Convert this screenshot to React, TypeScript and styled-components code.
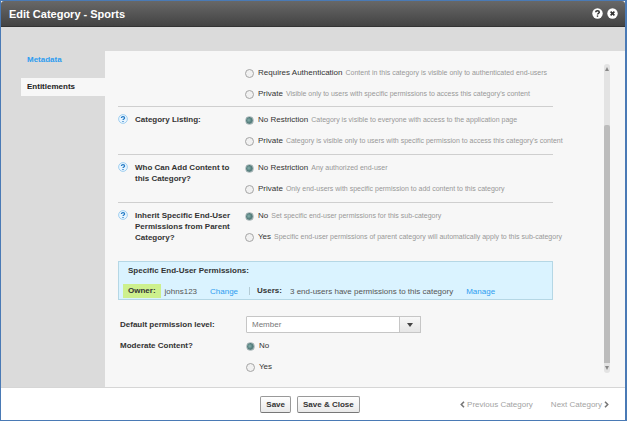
import React from "react";
import styled, { createGlobalStyle } from "styled-components";

const GlobalStyle = createGlobalStyle`
  *, *::before, *::after { box-sizing: border-box; }
  body { margin: 0; }
  body, button, select, input {
    font-family: "Liberation Sans", Arial, Helvetica, sans-serif;
    font-size: 8px;
  }
`;

const Dialog = styled.div`
  display: flex;
  flex-direction: column;
  min-height: 100vh;
  background: #fff;
  border: 1px solid #4a7ab5;
  border-right-width: 2px;
  color: #333;
`;

const Header = styled.header`
  display: flex;
  align-items: center;
  gap: 4px;
  height: 26px;
  padding: 0 7px 0 8px;
  background: linear-gradient(#686868, #434343);
  border-bottom: 1px solid #333;
  border-radius: 3px 3px 0 0;
`;

const Title = styled.h1`
  flex: 1;
  margin: 0;
  color: #fff;
  font-size: 11px;
  line-height: 16px;
`;

const IconButton = styled.button`
  display: flex;
  padding: 0;
  border: 0;
  background: none;
`;

const Body = styled.div`
  display: flex;
  flex: 1;
  padding-top: 24px;
  background: #dbdbdb;
  border-bottom: 1px solid #d6d6d6;
`;

const Sidebar = styled.nav`
  display: flex;
  flex-direction: column;
  flex: 0 0 104px;
  gap: 9px;
  padding: 0 0 0 20px;
`;

const Tab = styled.a<{ $active?: boolean }>`
  height: 18px;
  padding: 0 6px;
  line-height: 18px;
  font-weight: bold;
  text-decoration: none;
  color: ${(p) => (p.$active ? "#222" : "#2e9df0")};
  background: ${(p) => (p.$active ? "#f7f7f7" : "transparent")};
`;

const Main = styled.main`
  display: flex;
  flex: 1;
  min-width: 0;
  padding: 11px 15px 10px 13px;
  background: #f7f7f7;
`;

const Content = styled.div`
  flex: 1;
  min-width: 0;
  margin-right: 51px;
`;

const Section = styled.section<{ $divided?: boolean }>`
  display: grid;
  grid-template-columns: 17px 110px minmax(0, 1fr);
  padding: ${(p) => (p.$divided ? "2px 0 3px" : "0 0 2px")};
  border-top: ${(p) => (p.$divided ? "1px solid #cfcfcf" : "0")};
`;

const HelpCell = styled.div`
  padding: 5px 0 0;
`;

const Question = styled.div`
  padding: 5px 8px 0 0;
  font-weight: bold;
  line-height: 11px;
`;

const Options = styled.div`
  display: flex;
  flex-direction: column;
`;

const Option = styled.label`
  display: flex;
  align-items: center;
  height: 21px;
  white-space: nowrap;
`;

const Radio = styled.input`
  appearance: none;
  flex: none;
  width: 9px;
  height: 9px;
  margin: 2px 4px 0 0;
  border: 1px solid #a5a5a5;
  border-radius: 50%;
  background: #f1f1f1;
  &:checked {
    border-color: #b0bcbe;
    background: radial-gradient(circle at 40% 45%, #86b0ad, #527b7a 50%, #a5b9b9);
  }
`;

const Hint = styled.span`
  margin-left: 3px;
  color: #989898;
  font-size: 7px;
`;

const Permissions = styled.section`
  margin-top: 11px;
  padding: 3px 4px 1px;
  background: #daf3ff;
  border: 1px solid #b5d7e5;
`;

const PermissionsTitle = styled.h2`
  margin: 0 0 7px;
  padding-left: 5px;
  font-size: 8px;
  line-height: 12px;
`;

const PermissionsRow = styled.div`
  display: flex;
  align-items: center;
  height: 14px;
  white-space: nowrap;
  color: #555;
`;

const Owner = styled.strong`
  padding: 0 5px;
  margin-right: 4px;
  line-height: 14px;
  color: #333;
  background: #cdf08d;
`;

const TextLink = styled.a`
  margin-left: 13px;
  color: #2e9df0;
  text-decoration: none;
`;

const Users = styled.strong`
  margin: 0 8px 0 11px;
  padding-left: 7px;
  border-left: 1px solid #b3cbd5;
  line-height: 8px;
  color: #333;
`;

const Settings = styled.div`
  display: grid;
  grid-template-columns: 128px minmax(0, 1fr);
  padding-top: 14px;
`;

const FieldLabel = styled.label`
  padding-left: 2px;
  font-weight: bold;
  line-height: 21px;
`;

const SelectBox = styled.div`
  display: grid;
  align-items: stretch;
  width: 175px;
  height: 17px;
  margin: 2px 0;
`;

const Select = styled.select`
  grid-area: 1 / 1;
  appearance: none;
  width: 100%;
  padding: 0 28px 0 5px;
  border: 1px solid #c6c6c6;
  border-radius: 1px;
  background: #fff;
  color: #777;
`;

const SelectArrow = styled.span`
  grid-area: 1 / 1;
  justify-self: end;
  display: flex;
  align-items: center;
  justify-content: center;
  width: 22px;
  border: 1px solid #c6c6c6;
  background: linear-gradient(#f8f8f8, #e6e6e6);
  pointer-events: none;
`;

const ScrollTrack = styled.div`
  display: flex;
  flex-direction: column;
  flex: 0 0 6px;
  margin: 2px 0 4px;
  border-radius: 3px;
  background: #e3e3e3;
  svg { flex: none; margin: 3px 0 3px 1px; }
`;

const ScrollSpace = styled.div`
  flex: 51;
`;

const ScrollThumb = styled.div`
  flex: 237;
  border-radius: 2px 2px 0 0;
  background: #bcbcbc;
`;

const Footer = styled.footer`
  display: grid;
  grid-template-columns: 1fr auto 1fr;
  align-items: center;
  height: 32px;
  padding: 0 16px 0 10px;
`;

const Actions = styled.div`
  grid-column: 2;
  display: flex;
  gap: 6px;
`;

const Button = styled.button`
  height: 17px;
  padding: 0 5px;
  border: 1px solid #999;
  border-bottom-color: #777;
  border-radius: 2px;
  background: linear-gradient(#fff, #e9e9e9);
  color: #333;
  font-weight: bold;
`;

const Pager = styled.div`
  display: flex;
  justify-content: flex-end;
  gap: 18px;
`;

const PagerLink = styled.a`
  display: flex;
  align-items: center;
  gap: 2px;
  color: #a3a3a3;
  text-decoration: none;
  white-space: nowrap;
`;

const HelpIcon = () => (
  <svg width="10" height="10" viewBox="0 0 10 10" fill="none" aria-hidden="true">
    <circle cx="5" cy="5" r="4.4" fill="#e8f5ff" stroke="#8fc7ee" strokeWidth="0.8" />
    <path d="M3.4 3.9C3.4 2.1 6.6 2.1 6.6 3.9C6.6 4.9 5 4.9 5 6" stroke="#2279c4" strokeWidth="1.2" />
    <path d="M4.4 6.9H5.6V8H4.4Z" fill="#2279c4" />
  </svg>
);

const Chevron = ({ d }: { d: string }) => (
  <svg width="5" height="7" viewBox="0 0 5 7" fill="none" aria-hidden="true">
    <path d={d} stroke="#777" strokeWidth="1.6" />
  </svg>
);

type Choice = { label: string; hint?: string };

function Choices({ name, items, selected }: { name: string; items: Choice[]; selected?: number }) {
  return (
    <Options role="radiogroup" aria-label={name}>
      {items.map((item, i) => (
        <Option key={item.label}>
          <Radio type="radio" name={name} defaultChecked={selected === i} />
          <span>{item.label}</span>
          {item.hint && <Hint>{item.hint}</Hint>}
        </Option>
      ))}
    </Options>
  );
}

const questions = [
  {
    title: "Category Listing:",
    items: [
      { label: "No Restriction", hint: "Category is visible to everyone with access to the application page" },
      { label: "Private", hint: "Category is visible only to users with specific permission to access this category's content" },
    ],
  },
  {
    title: "Who Can Add Content to this Category?",
    items: [
      { label: "No Restriction", hint: "Any authorized end-user" },
      { label: "Private", hint: "Only end-users with specific permission to add content to this category" },
    ],
  },
  {
    title: "Inherit Specific End-User Permissions from Parent Category?",
    items: [
      { label: "No", hint: "Set specific end-user permissions for this sub-category" },
      { label: "Yes", hint: "Specific end-user permissions of parent category will automatically apply to this sub-category" },
    ],
  },
];

const privacy = [
  { label: "Requires Authentication", hint: "Content in this category is visible only to authenticated end-users" },
  { label: "Private", hint: "Visible only to users with specific permissions to access this category's content" },
];

export default function App() {
  return (
    <>
      <GlobalStyle />
      <Dialog role="dialog" aria-label="Edit Category - Sports">
        <Header>
          <Title>Edit Category - Sports</Title>
          <IconButton aria-label="Help">
            <svg width="11" height="11" viewBox="0 0 11 11" fill="none">
              <circle cx="5.5" cy="5.5" r="5.2" fill="#fff" />
              <path d="M3.7 4.3C3.7 2.2 7.3 2.2 7.3 4.3C7.3 5.3 5.5 5.3 5.5 6.6" stroke="#333" strokeWidth="1.5" />
              <path d="M4.8 7.4H6.2V8.8H4.8Z" fill="#333" />
            </svg>
          </IconButton>
          <IconButton aria-label="Close">
            <svg width="11" height="11" viewBox="0 0 11 11" fill="none">
              <circle cx="5.5" cy="5.5" r="5.2" fill="#fff" />
              <path d="M3.6 3.6L7.4 7.4M7.4 3.6L3.6 7.4" stroke="#333" strokeWidth="1.6" />
            </svg>
          </IconButton>
        </Header>
        <Body>
          <Sidebar>
            <Tab href="#metadata">Metadata</Tab>
            <Tab href="#entitlements" $active>Entitlements</Tab>
          </Sidebar>
          <Main>
            <Content>
              <Section>
                <HelpCell />
                <Question />
                <Choices name="Content Privacy" items={privacy} />
              </Section>
              {questions.map((q) => (
                <Section key={q.title} $divided>
                  <HelpCell><HelpIcon /></HelpCell>
                  <Question>{q.title}</Question>
                  <Choices name={q.title} items={q.items} selected={0} />
                </Section>
              ))}
              <Permissions>
                <PermissionsTitle>Specific End-User Permissions:</PermissionsTitle>
                <PermissionsRow>
                  <Owner>Owner:</Owner>
                  <span>johns123</span>
                  <TextLink href="#change">Change</TextLink>
                  <Users>Users:</Users>
                  <span>3 end-users have permissions to this category</span>
                  <TextLink href="#manage">Manage</TextLink>
                </PermissionsRow>
              </Permissions>
              <Settings>
                <FieldLabel htmlFor="level">Default permission level:</FieldLabel>
                <SelectBox>
                  <Select id="level" defaultValue="Member">
                    <option>Member</option>
                  </Select>
                  <SelectArrow>
                    <svg width="6" height="4" viewBox="0 0 6 4"><path d="M0 0H6L3 4Z" fill="#444" /></svg>
                  </SelectArrow>
                </SelectBox>
                <FieldLabel as="div">Moderate Content?</FieldLabel>
                <Choices name="Moderate Content" items={[{ label: "No" }, { label: "Yes" }]} selected={0} />
              </Settings>
            </Content>
            <ScrollTrack aria-hidden="true">
              <svg width="4" height="4" viewBox="0 0 4 4"><path d="M0 4L2 0L4 4Z" fill="#888" /></svg>
              <ScrollSpace />
              <ScrollThumb />
              <svg width="4" height="4" viewBox="0 0 4 4"><path d="M0 0H4L2 4Z" fill="#888" /></svg>
            </ScrollTrack>
          </Main>
        </Body>
        <Footer>
          <Actions>
            <Button>Save</Button>
            <Button>Save &amp; Close</Button>
          </Actions>
          <Pager>
            <PagerLink href="#previous"><Chevron d="M4 0.8L1.3 3.5L4 6.2" />Previous Category</PagerLink>
            <PagerLink href="#next">Next Category<Chevron d="M1 0.8L3.7 3.5L1 6.2" /></PagerLink>
          </Pager>
        </Footer>
      </Dialog>
    </>
  );
}
